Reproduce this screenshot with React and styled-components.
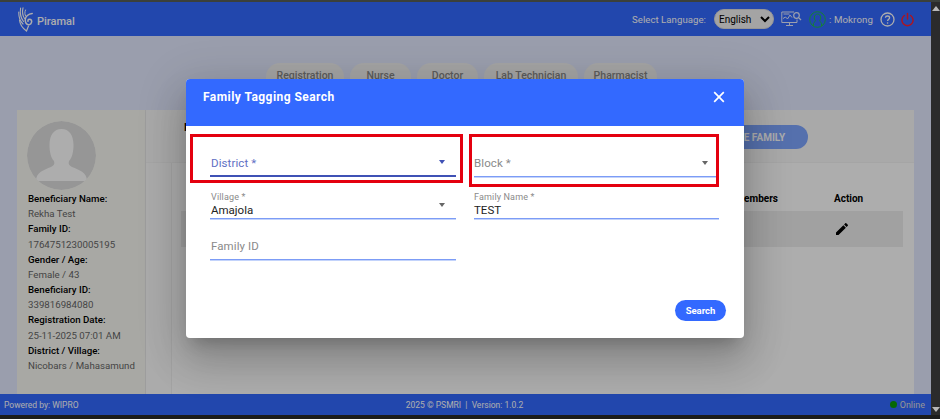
import React from "react";
import styled, { createGlobalStyle } from "styled-components";

const Global = createGlobalStyle`
  html, body { margin: 0; padding: 0; background: #2b2b2b; overflow: hidden; }
  * { box-sizing: border-box; }
  body { font-family: Roboto, "Liberation Sans", sans-serif; }
`;

const Frame = styled.div`
  width: 940px; height: 419px; display: flex; background: #2a2a2a;
  border-top: 2px solid #3b403b; border-bottom: 4px solid #1c1c1c;
`;
const Page = styled.div`
  position: relative; width: 931px; height: 413px; display: flex; flex-direction: column;
  background: #e3e9ff; overflow: hidden;
`;
const Scrollbar = styled.div`
  width: 9px; display: flex; flex-direction: column; justify-content: space-between;
  align-items: center; padding: 4px 0 3px; background: #2b2b2b;
`;
const Arrow = styled.span`
  width: 0; height: 0; border-left: 4px solid transparent; border-right: 4px solid transparent;
  ${p => p.$down ? "border-top: 5px solid #b8b8b8;" : "border-bottom: 5px solid #b8b8b8;"}
`;
const Header = styled.header`
  height: 34px; flex: none; display: flex; align-items: center; background: #3369ff;
  padding: 0 17px 0 18px; color: #fff;
`;
const Brand = styled.div`
  display: flex; align-items: center; gap: 4px; font: 500 11px Roboto, sans-serif; color: #fff;
`;
const BrandName = styled.span` padding-top: 4px; `;
const Spacer = styled.div` flex: 1; `;
const LangLabel = styled.span` font-size: 9.6px; margin-right: 8px; letter-spacing: .05px; `;
const LangSelect = styled.select`
  width: 60px; height: 20px; border-radius: 10px; border: 1px solid #ddd; background: #f2f2f2;
  font: 10px Roboto, sans-serif; color: #000; padding: 0; margin-right: 7px;
`;
const UserName = styled.span` font-size: 9.7px; margin: 0 7px 0 3px; letter-spacing: .1px; white-space: nowrap; `;
const IconBtn = styled.span` display: inline-flex; margin-right: ${p => p.$mr || 0}px; `;

const Content = styled.main` flex: 1; display: flex; flex-direction: column; min-height: 0; `;
const Tabs = styled.nav`
  display: flex; gap: 6px; height: 74px; padding: 27px 0 0 266px; flex: none;
`;
const Tab = styled.div`
  width: ${p => p.$w}px; height: 30px; border-radius: 14px 14px 0 0; background: #f2f2f2;
  color: #888; font-size: 10.5px; font-weight: 500; text-align: center; padding-top: 6px; white-space: nowrap;
`;
const Panels = styled.section` flex: 1; display: flex; margin: 0 17px; min-height: 0; `;
const Profile = styled.aside`
  width: 129px; flex: none; background: #f8f8f2; padding: 11px 0 0 11px; border-right: 1px solid #e8e8e8;
`;
const Avatar = styled.div`
  width: 69px; height: 69px; border-radius: 50%; overflow: hidden; margin: 0 0 1px -1px;
`;
const InfoLabel = styled.div` font-size: 9.7px; line-height: 15.17px; font-weight: 500; color: #000; white-space: nowrap; `;
const InfoValue = styled.div` font-size: 9.7px; line-height: 15.17px; color: #666; white-space: nowrap; `;
const Main = styled.div` flex: 1; min-width: 0; background: #fdfdfd; display: flex; flex-direction: column; `;
const MainTop = styled.div`
  height: 53px; flex: none; display: flex; justify-content: space-between; align-items: flex-start;
  padding: 15px 106px 0 38px; border-bottom: 1px solid #f4f4f4; background: #fafafa;
`;
const MainTitle = styled.h3` margin: -4px 0 0; font: 700 11px/13px Roboto, sans-serif; color: #000; `;
const CreateBtn = styled.button`
  width: 130px; height: 24px; border: 0; border-radius: 12px; background: #7ea5ff; color: #fff;
  font: 700 10px Roboto, sans-serif; padding: 0 0 0 12px;
`;
const TablePanel = styled.div` flex: 1; margin-left: 25px; padding: 27px 11px 0 9px; background: #fff; border-left: 1px solid #f0f0f0; `;
const THead = styled.div`
  display: grid; grid-template-columns: 597px 56px 1fr; height: 21px; font-size: 10px; font-weight: 700; color: #000;
  align-items: center; padding-bottom: 4px;
`;
const THCell = styled.div` grid-column: ${p => p.$col}; text-align: ${p => p.$right ? "right" : "left"}; `;
const TRow = styled.div` height: 36px; background: #eeeeee; display: grid; grid-template-columns: 653px 1fr; align-items: center; `;
const EditCell = styled.div` grid-column: 2; display: flex; `;

const Footer = styled.footer`
  height: 21px; flex: none; background: #3369ff; color: #fff; font-size: 8.5px;
  display: grid; grid-template-columns: 1fr auto 1fr; align-items: center; padding: 0 6px 0 4px;
`;
const FootRight = styled.div` display: flex; justify-content: flex-end; align-items: center; gap: 2px; color: #ddd; font-size: 9px; `;
const Dot = styled.span` width: 7px; height: 7px; border-radius: 50%; background: #0a9a0a; margin-right: 1px; `;

const Backdrop = styled.div`
  position: absolute; inset: 0; background: rgba(0,0,0,.32); padding-right: 1px;
  display: flex; align-items: center; justify-content: center;
`;
const Modal = styled.div`
  position: relative; width: 558px; height: 259px; background: #fff; border-radius: 4px; overflow: hidden;
  display: flex; flex-direction: column;
`;
const ModalShadow = styled.div`
  border-radius: 4px;
  box-shadow: 0 11px 15px -7px rgba(0,0,0,.2), 0 24px 38px 3px rgba(0,0,0,.14), 0 9px 46px 8px rgba(0,0,0,.12);
`;
const ModalHead = styled.div`
  height: 47px; flex: none; background: #3369ff; color: #fff; display: flex; align-items: flex-start;
  justify-content: space-between; padding: 12px 19px 0 17px;
`;
const ModalTitle = styled.h2` margin: 0; font: 700 12px/13px Roboto, sans-serif; letter-spacing: .45px; `;
const Close = styled.span` display: flex; `;
const ModalBody = styled.div` flex: 1; display: flex; flex-direction: column; padding: 9px 18px 17px 24px; `;
const FormGrid = styled.div`
  display: grid; grid-template-columns: 246px 245px; grid-template-rows: 42px 42px 41px; column-gap: 18px;
`;
const Field = styled.div`
  display: flex; justify-content: space-between; align-items: flex-end;
  padding: 0 11px 0 ${p => p.$flush ? 0 : 1}px;
  border-bottom: ${p => p.$focus ? "2px solid #3f51b5" : "1px solid #7c9cf6"};
  box-shadow: ${p => p.$focus ? "none" : "0 1px 0 #c3d3fb"};
`;
const FieldText = styled.div` display: flex; flex-direction: column; padding-bottom: ${p => p.$filled ? 1 : p.$focus ? 5 : 6}px; `;
const FloatLabel = styled.span` font-size: 9px; line-height: 11px; color: #8a8a8a; letter-spacing: .15px; `;
const Value = styled.span` font-size: 11.5px; line-height: 14px; color: #222; `;
const Placeholder = styled.span`
  font-size: 11.5px; line-height: 14px; letter-spacing: .1px; color: ${p => p.$focus ? "#5f6fc4" : "#8a8a8a"};
`;
const Caret = styled.span`
  width: 0; height: 0; margin-bottom: 11px; border-left: 3.5px solid transparent; border-right: 3.5px solid transparent;
  border-top: 4px solid ${p => p.$focus ? "#3f51b5" : "#666"};
`;
const ModalFoot = styled.div` margin-top: auto; display: flex; justify-content: flex-end; `;
const SearchBtn = styled.button`
  width: 51px; height: 21px; border: 0; border-radius: 11px; background: #3369ff; color: #fff;
  font: 700 9.5px Roboto, sans-serif; padding: 0;
`;
const RedBox = styled.div`
  position: absolute; left: ${p => p.$x}px; top: ${p => p.$y}px; width: ${p => p.$w}px; height: ${p => p.$h}px;
  border: 3px solid #e4000f; pointer-events: none;
`;

const Logo = () => (
  <svg width="15" height="25" viewBox="0 0 15 25" fill="none" stroke="#fff" strokeLinecap="round">
    <path d="M.8 5 C.6 10 2 14 5 17" strokeWidth="1.1" />
    <path d="M2.6 1 C1.8 6 2.8 11 5.5 14.5" strokeWidth="1.1" />
    <path d="M5 .8 C4 5 4.6 8.5 6.5 11.5" strokeWidth="1.1" />
    <path d="M7.5 3 C6.5 5.5 6.8 7.5 7.6 9" strokeWidth="1" />
    <path d="M14.2 6.5 C10.5 6.8 7.2 9.5 7.2 13 C7.2 16.5 9.6 18.4 11.5 17.6 C13.8 16.7 14.4 13.5 12.6 12.5 C11.2 11.8 9.6 12.6 10 14.2" strokeWidth="1.5" />
    <path d="M1.5 13 C2 18 5 21.5 8.5 24 L10.5 19" strokeWidth="1.2" />
  </svg>
);
const MonitorIcon = () => (
  <svg width="21" height="16" viewBox="0 0 21 16" fill="none" stroke="#e6ecff" strokeWidth="1">
    <path d="M13 1H.8v10.5H16V8.5" />
    <path d="M5 14.5h7M8.5 11.5v3" />
    <path d="M2 7.5l2.5-1.5 2 2 2.5-4 2 2.5" />
    <path d="M2.5 3h6" />
    <circle cx="15.5" cy="4.5" r="2.8" strokeWidth="1.2" />
    <path d="M17.6 6.6l2.4 2.4" strokeWidth="1.3" />
  </svg>
);
const UserIcon = () => (
  <svg width="17" height="17" viewBox="0 0 17 17" fill="none" stroke="#1fc14b" strokeWidth="1">
    <circle cx="8.5" cy="8.5" r="7.8" />
    <path d="M4.5 15.2 V12.5 C4.5 11 6.5 10.8 6.5 9.8 C5.5 9 5.2 7.5 5.4 6 C5.7 4 7 3.2 8.5 3.2 C10 3.2 11.3 4 11.6 6 C11.8 7.5 11.5 9 10.5 9.8 C10.5 10.8 12.5 11 12.5 12.5 V15.2" />
  </svg>
);
const HelpIcon = () => (
  <svg width="15" height="15" viewBox="0 0 15 15" fill="none" stroke="#fff">
    <circle cx="7.5" cy="7.5" r="6.5" strokeWidth="1.3" />
    <path d="M5.4 5.8 C5.5 4.5 6.4 4 7.5 4 C8.7 4 9.6 4.7 9.6 5.8 C9.6 7.2 7.6 7.3 7.6 9" strokeWidth="1.3" />
    <circle cx="7.6" cy="11" r=".8" fill="#fff" stroke="none" />
  </svg>
);
const PowerIcon = () => (
  <svg width="13" height="15" viewBox="0 0 14 15" fill="none" stroke="#ff2030" strokeWidth="1.6" strokeLinecap="round">
    <path d="M7 1v6" />
    <path d="M3.6 3.2 A6 6 0 1 0 10.4 3.2" />
  </svg>
);
const AvatarArt = () => (
  <svg width="69" height="69" viewBox="0 0 69 69">
    <circle cx="34.5" cy="34.5" r="34.5" fill="#dedede" />
    <path d="M34.5 60 H9 C9 51 17 49 24 46 C27 44.5 28 43 27 40 C24 37 22.5 31 22.5 24 C22.5 14 27 8 34.5 8 C42 8 46.5 14 46.5 24 C46.5 31 45 37 42 40 C41 43 42 44.5 45 46 C52 49 60 51 60 60 Z" fill="#fff" />
  </svg>
);
const Pencil = () => (
  <svg width="16" height="16" viewBox="0 0 24 24" fill="#000">
    <path d="M3 17.25V21h3.75L17.81 9.94l-3.75-3.75L3 17.25zM20.71 7.04c.39-.39.39-1.02 0-1.41l-2.34-2.34c-.39-.39-1.02-.39-1.41 0l-1.83 1.83 3.75 3.75 1.83-1.83z" />
  </svg>
);
const X = () => (
  <svg width="12" height="12" viewBox="0 0 12 12" stroke="#fff" strokeWidth="1.7">
    <path d="M1.2 1.2l9.6 9.6M10.8 1.2l-9.6 9.6" />
  </svg>
);

const info = [
  ["Beneficiary Name:", "Rekha Test"],
  ["Family ID:", "1764751230005195"],
  ["Gender / Age:", "Female / 43"],
  ["Beneficiary ID:", "339816984080"],
  ["Registration Date:", "25-11-2025 07:01 AM"],
  ["District / Village:", "Nicobars / Mahasamund"],
];
const tabs = [["Registration", 78], ["Nurse", 61], ["Doctor", 61], ["Lab Technician", 94], ["Pharmacist", 73]];

export default function App() {
  return (
    <>
      <Global />
      <Frame>
        <Page>
          <Header>
            <Brand><Logo /><BrandName>Piramal</BrandName></Brand>
            <Spacer />
            <LangLabel>Select Language:</LangLabel>
            <LangSelect defaultValue="English"><option>English</option></LangSelect>
            <IconBtn $mr={7}><MonitorIcon /></IconBtn>
            <UserIcon />
            <UserName>: Mokrong</UserName>
            <IconBtn $mr={6}><HelpIcon /></IconBtn>
            <PowerIcon />
          </Header>
          <Content>
            <Tabs>{tabs.map(([t, w]) => <Tab key={t} $w={w}>{t}</Tab>)}</Tabs>
            <Panels>
              <Profile>
                <Avatar><AvatarArt /></Avatar>
                {info.map(([l, v]) => (
                  <React.Fragment key={l}>
                    <InfoLabel>{l}</InfoLabel>
                    <InfoValue>{v}</InfoValue>
                  </React.Fragment>
                ))}
              </Profile>
              <Main>
                <MainTop>
                  <MainTitle>Family Details</MainTitle>
                  <CreateBtn>CREATE FAMILY</CreateBtn>
                </MainTop>
                <TablePanel>
                  <THead>
                    <THCell $col={1} $right>Members</THCell>
                    <THCell $col={3}>Action</THCell>
                  </THead>
                  <TRow><EditCell><Pencil /></EditCell></TRow>
                </TablePanel>
              </Main>
            </Panels>
          </Content>
          <Footer>
            <span>Powered by: WIPRO</span>
            <span>2025 © PSMRI &nbsp;|&nbsp; Version: 1.0.2</span>
            <FootRight><Dot />Online</FootRight>
          </Footer>
          <Backdrop>
            <ModalShadow>
              <Modal>
                <ModalHead>
                  <ModalTitle>Family Tagging Search</ModalTitle>
                  <Close><X /></Close>
                </ModalHead>
                <ModalBody>
                  <FormGrid>
                    <Field $focus>
                      <FieldText $focus><Placeholder $focus>District *</Placeholder></FieldText>
                      <Caret $focus />
                    </Field>
                    <Field $flush>
                      <FieldText><Placeholder>Block *</Placeholder></FieldText>
                      <Caret />
                    </Field>
                    <Field>
                      <FieldText $filled><FloatLabel>Village *</FloatLabel><Value>Amajola</Value></FieldText>
                      <Caret />
                    </Field>
                    <Field $flush>
                      <FieldText $filled><FloatLabel>Family Name *</FloatLabel><Value>TEST</Value></FieldText>
                    </Field>
                    <Field>
                      <FieldText><Placeholder>Family ID</Placeholder></FieldText>
                    </Field>
                  </FormGrid>
                  <ModalFoot><SearchBtn>Search</SearchBtn></ModalFoot>
                </ModalBody>
                <RedBox $x={4} $y={55} $w={273} $h={49} />
                <RedBox $x={283} $y={55} $w={250} $h={53} />
              </Modal>
            </ModalShadow>
          </Backdrop>
        </Page>
        <Scrollbar><Arrow /><Arrow $down /></Scrollbar>
      </Frame>
    </>
  );
}
